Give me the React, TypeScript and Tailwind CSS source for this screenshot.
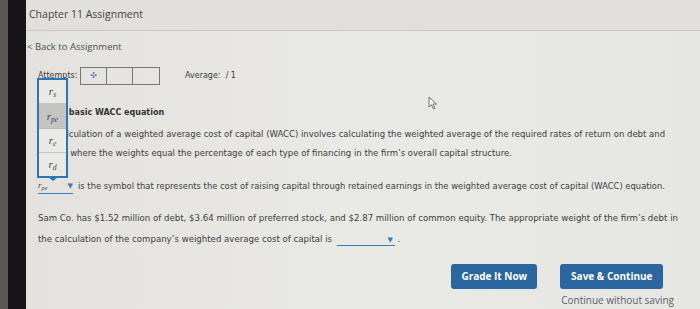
import React from 'react';

const R = ({ sub }: { sub: string }) => (
  <span className="font-['Liberation_Serif',serif] italic text-[#3b4a5a]">
    r<sub className="text-[0.7em]">{sub}</sub>
  </span>
);

export default function App() {
  return (
    <div className="flex h-[309px] w-[700px] overflow-hidden bg-[#e6e5e1] font-['DejaVu_Sans',sans-serif] text-[#3d3d3d]">
      {/* photo edge of the monitor */}
      <div className="flex w-[26px] shrink-0">
        <div className="w-[8px] bg-[#5e5751]" />
        <div className="flex-1 bg-[#161618]" />
      </div>

      <div className="relative flex flex-1 flex-col bg-gradient-to-r from-[#e3e2de] via-[#e9e9e6] to-[#e6e6e2]">
        {/* Header */}
        <div className="flex h-[31px] items-center border-b border-[#c9c8c4] bg-[#e1e0dc] pl-[3px] font-['Open_Sans',sans-serif] text-[10.5px] text-[#444]">
          Chapter 11 Assignment
        </div>

        <div className="mt-[9px] pl-[1px] font-['Open_Sans',sans-serif] text-[9.5px] text-[#4a4f57]">
          &lt; Back to Assignment
        </div>

        {/* Attempts */}
        <div className="mt-[13px] flex h-[18px] items-center pl-[12px] text-[8px]">
          <span className="w-[42px]">Attempts:</span>
          <div className="flex h-[18px] border border-[#777]">
            <div className="flex w-[26px] items-center justify-center border-r border-[#777] text-[8px] text-[#3a6fc0]">✣</div>
            <div className="w-[26px] border-r border-[#777]" />
            <div className="w-[26px]" />
          </div>
          <span className="ml-[25px]">Average: &nbsp;/ 1</span>
        </div>

        {/* Question */}
        <div className="mt-[22px] pl-[12px] text-[8px] font-bold text-[#333]">4. The basic WACC equation</div>

        <div className="mt-[6px] pl-[12px] pr-[10px] text-[8.5px] leading-[19px]">
          The calculation of a weighted average cost of capital (WACC) involves calculating the weighted average of the required rates of return on debt and
          <br />
          equity, where the weights equal the percentage of each type of financing in the firm’s overall capital structure.
        </div>

        <div className="mt-[16px] flex items-center pl-[12px] text-[8.4px]">
          <span className="mr-[5px] flex w-[35px] items-center justify-between border-b border-[#3a7bbf] text-[9px]">
            <R sub="pe" />
            <span className="text-[7px] text-[#3a7bbf]">▼</span>
          </span>
          is the symbol that represents the cost of raising capital through retained earnings in the weighted average cost of capital (WACC) equation.
        </div>

        <div className="mt-[14px] pl-[12px] pr-[10px] text-[8.6px] leading-[21px]">
          Sam Co. has $1.52 million of debt, $3.64 million of preferred stock, and $2.87 million of common equity. The appropriate weight of the firm’s debt in
          <br />
          the calculation of the company’s weighted average cost of capital is{' '}
          <span className="ml-[2px] inline-flex w-[58px] justify-end border-b border-[#3a7bbf] pr-[2px] align-baseline leading-[10px]">
            <span className="text-[7px] text-[#3a7bbf]">▼</span>
          </span>{' '}
          .
        </div>

        {/* Buttons */}
        <div className="mt-[14px] flex justify-end gap-[23px] pr-[26px] font-['Open_Sans',sans-serif]">
          <button className="h-[25px] w-[86px] rounded-[3px] bg-[#2b66a0] text-[10px] font-bold text-white">Grade It Now</button>
          <div className="flex flex-col items-start">
            <button className="h-[25px] w-[103px] rounded-[3px] bg-[#2b66a0] text-[10px] font-bold text-white">Save &amp; Continue</button>
            <span className="mt-[4px] pl-[1px] text-[10px] text-[#5a6270]">Continue without saving</span>
          </div>
        </div>

        {/* open dropdown menu */}
        <div className="absolute left-[11px] top-[78px] w-[31px] border-2 border-[#2f74b5] bg-[#e9e9e6] text-[11px]">
          <div className="flex h-[24px] items-center justify-center border-b border-[#c4c4c0]"><R sub="s" /></div>
          <div className="flex h-[25px] items-center justify-center border-b border-[#b8b8b4] bg-[#c3c5c0]"><R sub="pe" /></div>
          <div className="flex h-[24px] items-center justify-center border-b border-[#c4c4c0]"><R sub="e" /></div>
          <div className="flex h-[23px] items-center justify-center"><R sub="d" /></div>
          <div className="absolute -bottom-[5px] left-1/2 h-0 w-0 -translate-x-1/2 border-x-[5px] border-t-[4px] border-x-transparent border-t-[#2f74b5]" />
        </div>

        {/* mouse cursor */}
        <svg className="absolute left-[402px] top-[96px]" width="10" height="14" viewBox="0 0 10 14">
          <path d="M1 1 L1 11 L3.5 8.8 L5.5 13 L7 12.3 L5 8 L8.5 8 Z" fill="#f4f4f4" stroke="#555" strokeWidth="0.8" />
        </svg>
      </div>
    </div>
  );
}
